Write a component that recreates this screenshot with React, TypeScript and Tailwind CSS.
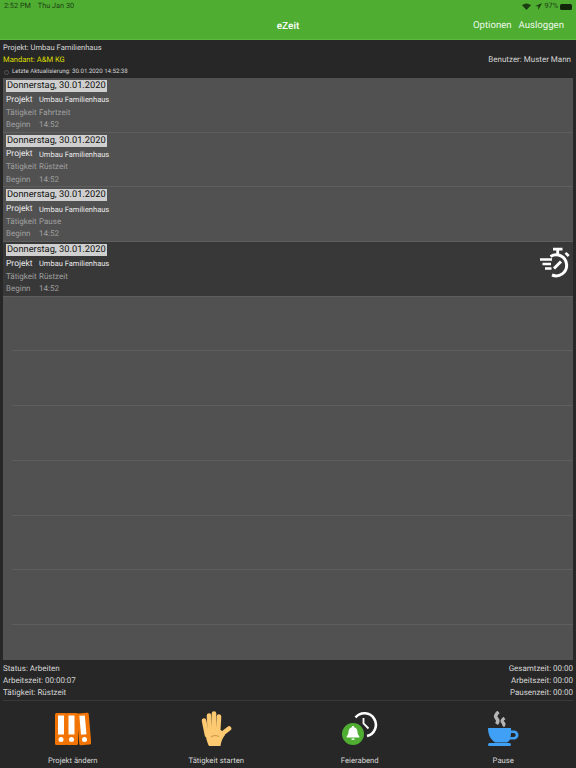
import React from 'react';

const entries = [
  { task: 'Fahrtzeit', active: false },
  { task: 'Rüstzeit', active: false },
  { task: 'Pause', active: false },
  { task: 'Rüstzeit', active: true },
];

const emptyRows = [0, 1, 2, 3, 4, 5, 6];

const StopwatchIcon = () => (
  <svg width="34" height="32" viewBox="0 0 34 32" fill="none" stroke="#fff" strokeWidth="3">
    <path d="M11.5 9.5A10.5 10.5 0 1 1 13 28" />
    <path d="M14 2.2h9.5M18.7 2.2v5" strokeWidth="2.8" />
    <path d="M26.5 5.8l3.2 3.2" strokeWidth="2.6" />
    <path d="M1 12.5h12M3.5 17h8.5M6 21.500h6.500" strokeWidth="2.6" />
    <path d="M15 21.5l7-7" strokeWidth="3" />
  </svg>
);

const BindersIcon = () => (
  <svg width="36" height="34" viewBox="0 0 36 34">
    <rect x="0" y="1" width="12" height="32" rx="1.5" fill="#f27405" />
    <rect x="11" y="1" width="12" height="32" rx="1.5" fill="#f27405" />
    <rect x="23" y="1" width="12" height="32" rx="1.5" fill="#f27405" transform="rotate(-5 29 17)" />
    <rect x="3" y="3.5" width="6" height="19" fill="#fff" />
    <rect x="13.5" y="3.5" width="6" height="19" fill="#fff" />
    <rect x="25.5" y="3.5" width="5.5" height="19" fill="#fff" transform="rotate(-5 29 17)" />
    <circle cx="6" cy="27.5" r="2.5" fill="#fff" />
    <circle cx="16.5" cy="27.5" r="2.5" fill="#fff" />
    <circle cx="29.5" cy="27.5" r="2.5" fill="#fff" />
  </svg>
);

const HandIcon = () => (
  <svg width="32" height="36" viewBox="0 0 32 36">
    <g stroke="#fdc971" strokeWidth="4.6" strokeLinecap="round" fill="none">
      <path d="M4 9.5L7 24" />
      <path d="M9 4.5L10 22" />
      <path d="M14 2.500V22" />
      <path d="M19 5.5L18 22" />
      <path d="M29 17.5L22 23" />
    </g>
    <path fill="#fdc971" d="M5 20L21 19l4 5c-3 4-4 7-4.5 11H9C7 31 6 27 5 20z" />
    <path d="M11 26c2.5-1.8 5-1.8 8-.5" stroke="#c9924a" strokeWidth="1" fill="none" />
  </svg>
);

const BellClockIcon = () => (
  <svg width="36" height="36" viewBox="0 0 36 36">
    <path d="M13.5 6.5A11.5 11.5 0 1 1 25 25" stroke="#fff" strokeWidth="2.6" fill="none" />
    <path d="M21.5 7v5.5l5 5" stroke="#fff" strokeWidth="1.8" fill="none" />
    <circle cx="11" cy="23" r="11" fill="#4fae32" />
    <g transform="translate(0 -1)">
      <path
        fill="#fff"
        d="M11 16c.8 0 1.2.5 1.2 1.2 2.300.6 3.300 2.500 3.300 4.800 0 2 1 3.300 1.800 4.300v1.200H4.700v-1.200c.8-1 1.800-2.300 1.800-4.300 0-2.300 1-4.200 3.300-4.800 0-.7.4-1.200 1.200-1.200z"
      />
      <rect x="9.5" y="28.5" width="3" height="1.300" fill="#fff" />
    </g>
  </svg>
);

const CupIcon = () => (
  <svg width="32" height="36" viewBox="0 0 32 36">
    <path d="M11.5 1c-3.500 3-3.500 5-1.500 7 1.200 1.300 1 3-.5 5" stroke="#b5b5b5" strokeWidth="3.6" fill="none" />
    <path d="M17.5 7c-3 2.300-3 3.500-1.200 5 1 1 .8 2-.4 3" stroke="#b5b5b5" strokeWidth="3.2" fill="none" />
    <path
      fill="#3fa0f5"
      fillRule="evenodd"
      d="M1 17h23v2.500h2.500c3 0 5 2 5 4.500s-2 4.500-5 4.500h-3.300c-1 1.300-2 2.300-3 3h-12C4.200 29 1 24.500 1 17zM24 22c0 1.500-.2 3-.6 4h3c1.400 0 2.300-.9 2.300-2s-.9-2-2.300-2z"
    />
    <rect x="1" y="32" width="23" height="3" rx="1.5" fill="#3fa0f5" />
  </svg>
);

const actions = [
  { label: 'Projekt ändern', icon: <BindersIcon /> },
  { label: 'Tätigkeit starten', icon: <HandIcon /> },
  { label: 'Feierabend', icon: <BellClockIcon /> },
  { label: 'Pause', icon: <CupIcon /> },
];

export default function App() {
  return (
    <div className="w-[576px] h-[768px] flex flex-col overflow-hidden bg-[#272727] text-[#d6d6d6] text-[8px] font-['Roboto',sans-serif] [text-rendering:geometricPrecision]">
      {/* nav bar */}
      <header className="h-10 shrink-0 flex flex-col bg-[#4fae32] border-b border-[#5cba3c]">
        <div className="h-[12px] flex items-center justify-between pl-[4px] pr-[4px] pt-[1px] text-[7.3px] text-[#1d3d12]">
          <div className="flex gap-[7px]">
            <span>2:52 PM</span>
            <span>Thu Jan 30</span>
          </div>
          <div className="flex items-center gap-[2px]">
            <svg width="9" height="7" viewBox="0 0 9 7" fill="#1d3d12">
              <path d="M4.5 7L0 2.300a6.400 6.400 0 0 1 9 0z" />
            </svg>
            <svg width="7" height="7" viewBox="0 0 7 7" fill="#1d3d12" className="ml-[2px]">
              <path d="M7 0L0 3.200h3.300V7z" />
            </svg>
            <span>97%</span>
            <span className="w-[12px] h-[6px] rounded-[1.5px] bg-[#12260b]" />
          </div>
        </div>
        <div className="relative flex-1 flex items-center justify-end gap-[7px] pr-[12px] pt-[1px] text-[9.6px] text-[#eef7ea]">
          <span className="absolute left-0 right-0 text-center text-[10px] font-medium text-white">eZeit</span>
          <span>Optionen</span>
          <span>Ausloggen</span>
        </div>
      </header>

      {/* project info */}
      <section className="h-[38px] shrink-0 flex flex-col pl-[3px] pr-[5px] pt-[2px]">
        <div className="h-[12px] flex items-center text-[7.6px]">Projekt: Umbau Familienhaus</div>
        <div className="h-[12px] flex items-center justify-between">
          <span className="text-[#dede00] text-[7.6px]">Mandant: A&amp;M KG</span>
          <span>Benutzer: Muster Mann</span>
        </div>
        <div className="h-[12px] flex items-center gap-[3px] text-[6.1px]">
          <span className="ml-[1px] w-[5px] h-[5px] rounded-full border border-[#555]" />
          <span>Letzte Aktualisierung: 30.01.2020 14:52:38</span>
        </div>
      </section>

      {/* entries */}
      <main className="flex-1 mx-[3px] bg-[#515151] overflow-hidden">
        {entries.map((entry, i) => (
          <div
            key={i}
            className={`relative h-[54.7px] pl-[3px] pt-[2px] border-b border-[#5e5e5e] ${entry.active ? 'bg-[#383838]' : ''}`}
          >
            <span className="block w-fit h-[12px] leading-[12px] px-[1px] bg-[#cfcfcf] text-[#111] text-[9.3px]">
              Donnerstag, 30.01.2020
            </span>
            <div className="h-[12px] mt-[2px] flex items-center text-[#e8e8e8]">
              <span className="w-[33px] text-[8.5px]">Projekt</span>
              <span className="text-[7.5px]">Umbau Familienhaus</span>
            </div>
            <div className="h-[13px] flex items-center text-[#a0a0a0]">
              <span className="w-[33px]">Tätigkeit</span>
              <span>{entry.task}</span>
            </div>
            <div className="h-[12px] flex items-center text-[#a0a0a0]">
              <span className="w-[33px]">Beginn</span>
              <span>14:52</span>
            </div>
            {entry.active && (
              <div className="absolute right-0 top-[5px]">
                <StopwatchIcon />
              </div>
            )}
          </div>
        ))}
        {emptyRows.map((row) => (
          <div key={row} className="h-[54.7px] pl-[9px]">
            <div className="h-full border-b border-[#5e5e5e]" />
          </div>
        ))}
      </main>

      {/* totals */}
      <section className="h-[41px] shrink-0 mx-[3px] flex justify-between border-b border-[#3a3a3a] pt-[3px]">
        <div className="flex flex-col">
          <span className="h-[12px] leading-[12px]">Status: Arbeiten</span>
          <span className="h-[12px] leading-[12px]">Arbeitszeit: 00:00:07</span>
          <span className="h-[12px] leading-[12px]">Tätigkeit: Rüstzeit</span>
        </div>
        <div className="flex flex-col items-end">
          <span className="h-[12px] leading-[12px]">Gesamtzeit: 00:00</span>
          <span className="h-[12px] leading-[12px]">Arbeitszeit: 00:00</span>
          <span className="h-[12px] leading-[12px]">Pausenzeit: 00:00</span>
        </div>
      </section>

      {/* tab bar */}
      <nav className="h-[67px] shrink-0 grid grid-cols-4 px-[1px]">
        {actions.map((action) => (
          <div key={action.label} className="flex flex-col items-center">
            <div className="h-[36px] mt-[10px] flex items-center justify-center">{action.icon}</div>
            <span className="mt-[8px] leading-[12px] text-[7.7px]">{action.label}</span>
          </div>
        ))}
      </nav>
    </div>
  );
}
